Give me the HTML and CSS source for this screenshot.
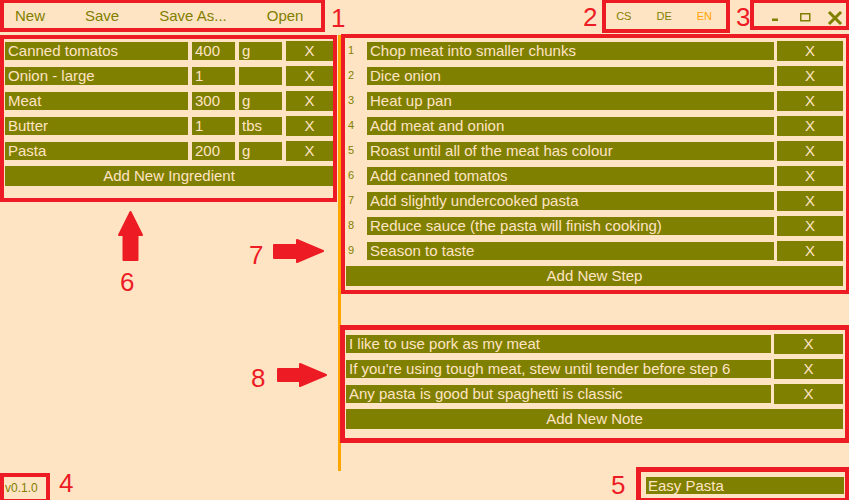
FILE: index.html
```html
<!DOCTYPE html>
<html lang="en">
<head>
<meta charset="utf-8">
<title>Recipe editor</title>
<link rel="stylesheet" href="styles.css">
</head>
<body>
<header class="topbar">
  <nav class="menu">
    <button class="menu-btn">New</button>
    <button class="menu-btn">Save</button>
    <button class="menu-btn">Save As...</button>
    <button class="menu-btn">Open</button>
  </nav>
  <div class="langs">
    <button class="lang">CS</button>
    <button class="lang">DE</button>
    <button class="lang active">EN</button>
  </div>
  <div class="winctl">
    <button class="ctl" aria-label="Minimize"><svg width="29" height="32" viewBox="0 0 29 32"><rect x="11" y="18.5" width="6" height="2.5" fill="#808000"/></svg></button>
    <button class="ctl" aria-label="Maximize"><svg width="29" height="32" viewBox="0 0 29 32"><rect x="10.75" y="13.75" width="9" height="7" fill="none" stroke="#808000" stroke-width="1.5"/></svg></button>
    <button class="ctl" aria-label="Close"><svg width="29" height="32" viewBox="0 0 29 32"><path d="M11 13 L21 23 M21 13 L11 23" stroke="#808000" stroke-width="3" stroke-linecap="square"/></svg></button>
  </div>
</header>

<main class="main">
  <section class="ingredients">
    <div class="ing-row"><input class="field" value="Canned tomatos"><input class="field" value="400"><input class="field" value="g"><button class="del">X</button></div>
    <div class="ing-row"><input class="field" value="Onion - large"><input class="field" value="1"><input class="field" value=""><button class="del">X</button></div>
    <div class="ing-row"><input class="field" value="Meat"><input class="field" value="300"><input class="field" value="g"><button class="del">X</button></div>
    <div class="ing-row"><input class="field" value="Butter"><input class="field" value="1"><input class="field" value="tbs"><button class="del">X</button></div>
    <div class="ing-row"><input class="field" value="Pasta"><input class="field" value="200"><input class="field" value="g"><button class="del">X</button></div>
    <button class="add">Add New Ingredient</button>
  </section>

  <section class="content">
    <div class="steps">
      <div class="step-row"><span class="step-num">1</span><input class="field" value="Chop meat into smaller chunks"><button class="del">X</button></div>
      <div class="step-row"><span class="step-num">2</span><input class="field" value="Dice onion"><button class="del">X</button></div>
      <div class="step-row"><span class="step-num">3</span><input class="field" value="Heat up pan"><button class="del">X</button></div>
      <div class="step-row"><span class="step-num">4</span><input class="field" value="Add meat and onion"><button class="del">X</button></div>
      <div class="step-row"><span class="step-num">5</span><input class="field" value="Roast until all of the meat has colour"><button class="del">X</button></div>
      <div class="step-row"><span class="step-num">6</span><input class="field" value="Add canned tomatos"><button class="del">X</button></div>
      <div class="step-row"><span class="step-num">7</span><input class="field" value="Add slightly undercooked pasta"><button class="del">X</button></div>
      <div class="step-row"><span class="step-num">8</span><input class="field" value="Reduce sauce (the pasta will finish cooking)"><button class="del">X</button></div>
      <div class="step-row"><span class="step-num">9</span><input class="field" value="Season to taste"><button class="del">X</button></div>
      <button class="add">Add New Step</button>
    </div>

    <div class="notes">
      <div class="note-row"><input class="field" value="I like to use pork as my meat"><button class="del">X</button></div>
      <div class="note-row"><input class="field" value="If you're using tough meat, stew until tender before step 6"><button class="del">X</button></div>
      <div class="note-row"><input class="field" value="Any pasta is good but spaghetti is classic"><button class="del">X</button></div>
      <button class="add">Add New Note</button>
    </div>
  </section>
</main>

<footer class="footer">
  <span class="version">v0.1.0</span>
  <input class="title" value="Easy Pasta">
</footer>

<div class="annotations" aria-hidden="true">
  <div class="mark m1"></div>
  <div class="mark m2"></div>
  <div class="mark m3"></div>
  <div class="mark m4"></div>
  <div class="mark m5"></div>
  <div class="mark m6"></div>
  <div class="mark m7"></div>
  <div class="mark m8"></div>
  <span class="label l1">1</span>
  <span class="label l2">2</span>
  <span class="label l3">3</span>
  <span class="label l4">4</span>
  <span class="label l5">5</span>
  <span class="label l6">6</span>
  <span class="label l7">7</span>
  <span class="label l8">8</span>
  <svg class="arrows" width="849" height="500" viewBox="0 0 849 500">
    <g fill="#ed1c24" stroke="#ed1c24" stroke-width="2" stroke-linejoin="round">
      <polygon points="130.5,212 142,235 137.5,235 137.5,260 123.5,260 123.5,235 119,235"/>
      <polygon points="274,245 297,245 297,240 323,251 297,262 297,258 274,258"/>
      <polygon points="278,369 300,369 300,364 326,375 300,386 300,381 278,381"/>
    </g>
  </svg>
</div>
</body>
</html>
```

FILE: styles.css
```css
* {
  box-sizing: border-box;
}

html, body {
  margin: 0;
  padding: 0;
}

body {
  width: 849px;
  height: 500px;
  position: relative;
  overflow: hidden;
  background: #ffe4c4;
  font-family: "Liberation Sans", Arial, sans-serif;
  display: flex;
  flex-direction: column;
}

button, input {
  font-family: "Liberation Sans", Arial, sans-serif;
  margin: 0;
  border: none;
  outline: none;
}

/* ---------- top bar ---------- */
.topbar {
  height: 35px;
  display: flex;
  align-items: flex-start;
  flex: none;
}

.menu {
  display: flex;
  gap: 40px;
  padding-left: 15px;
}

.menu-btn {
  background: transparent;
  color: #808000;
  font-size: 15px;
  line-height: 32px;
  height: 32px;
  padding: 0;
}

.langs {
  margin-left: auto;
  margin-right: 49px;
  display: flex;
  gap: 25px;
}

.lang {
  background: transparent;
  color: #808000;
  font-size: 11px;
  line-height: 32px;
  height: 32px;
  padding: 0;
}

.lang.active {
  color: #ffa500;
}

.winctl {
  display: flex;
  padding-right: 1px;
}

.ctl {
  width: 29px;
  height: 32px;
  padding: 0;
  background: transparent;
  display: block;
}

.ctl svg {
  display: block;
}

/* ---------- main ---------- */
.main {
  height: 436px;
  display: flex;
  flex: none;
}

.ingredients {
  box-sizing: content-box;
  width: 328px;
  padding: 6px 5px;
  border-right: 3px solid #ffa500;
  display: flex;
  flex-direction: column;
  gap: 5px;
}

.ing-row {
  height: 20px;
  display: grid;
  grid-template-columns: 1fr 43px 43px 47px;
  column-gap: 4px;
  align-items: center;
}

.field {
  height: 18px;
  background: #808000;
  color: #ffe4c4;
  font-size: 15px;
  padding: 0 0 2px 3px;
  min-width: 0;
  width: 100%;
}

.del {
  height: 20px;
  background: #808000;
  color: #ffe4c4;
  font-size: 15px;
  padding: 0 0 2px 0;
}

.add {
  height: 20px;
  width: 100%;
  background: #808000;
  color: #ffe4c4;
  font-size: 15px;
  padding: 0 0 2px 0;
}

.content {
  flex: 1;
  padding: 6px 6px 0 5px;
  display: flex;
  flex-direction: column;
}

.steps, .notes {
  display: flex;
  flex-direction: column;
  gap: 5px;
}

.notes {
  margin-top: 48px;
}

.step-row {
  height: 20px;
  display: grid;
  grid-template-columns: 21px 1fr 69px;
  align-items: center;
}

.step-row .del,
.note-row .del {
  margin-left: 3px;
}

.step-num {
  align-self: start;
  margin-top: 4px;
  padding-left: 2px;
  font-size: 11px;
  line-height: 11px;
  color: #808000;
}

.note-row {
  height: 20px;
  display: grid;
  grid-template-columns: 1fr 72px;
  align-items: center;
}

/* ---------- footer ---------- */
.footer {
  height: 29px;
  flex: none;
  display: flex;
  align-items: center;
  justify-content: space-between;
  padding: 0 5px;
}

.version {
  color: #808000;
  font-size: 12px;
  margin-top: 4px;
}

.title {
  width: 198px;
  height: 17px;
  background: #808000;
  color: #ffe4c4;
  font-size: 15px;
  padding: 0 0 1px 2px;
}

/* ---------- annotation overlay ---------- */
.annotations {
  position: absolute;
  left: 0;
  top: 0;
  width: 849px;
  height: 500px;
  pointer-events: none;
}

.mark {
  position: absolute;
  border: 4px solid #ed1c24;
}

.m1 { left: 0; top: -1px; width: 325px; height: 33px; }
.m2 { left: 602px; top: -1px; width: 128px; height: 34px; }
.m3 { left: 750px; top: -1px; width: 100px; height: 31px; }
.m4 { left: 0; top: 473px; width: 50px; height: 30px; }
.m5 { left: 636px; top: 467px; width: 214px; height: 36px; border-width: 5px; }
.m6 { left: 0; top: 35px; width: 337px; height: 167px; }
.m7 { left: 341px; top: 34px; width: 509px; height: 260px; }
.m8 { left: 340px; top: 325px; width: 510px; height: 118px; border-width: 5px; }

.label {
  position: absolute;
  font-family: "Liberation Sans", Arial, sans-serif;
  font-size: 26px;
  line-height: 26px;
  color: #ed1c24;
}

.l1 { left: 331px; top: 5px; }
.l2 { left: 583px; top: 4px; }
.l3 { left: 736px; top: 4px; }
.l4 { left: 59px; top: 470px; }
.l5 { left: 611px; top: 472px; }
.l6 { left: 120px; top: 269px; }
.l7 { left: 249px; top: 242px; }
.l8 { left: 251px; top: 365px; }

.arrows {
  position: absolute;
  left: 0;
  top: 0;
}
```
